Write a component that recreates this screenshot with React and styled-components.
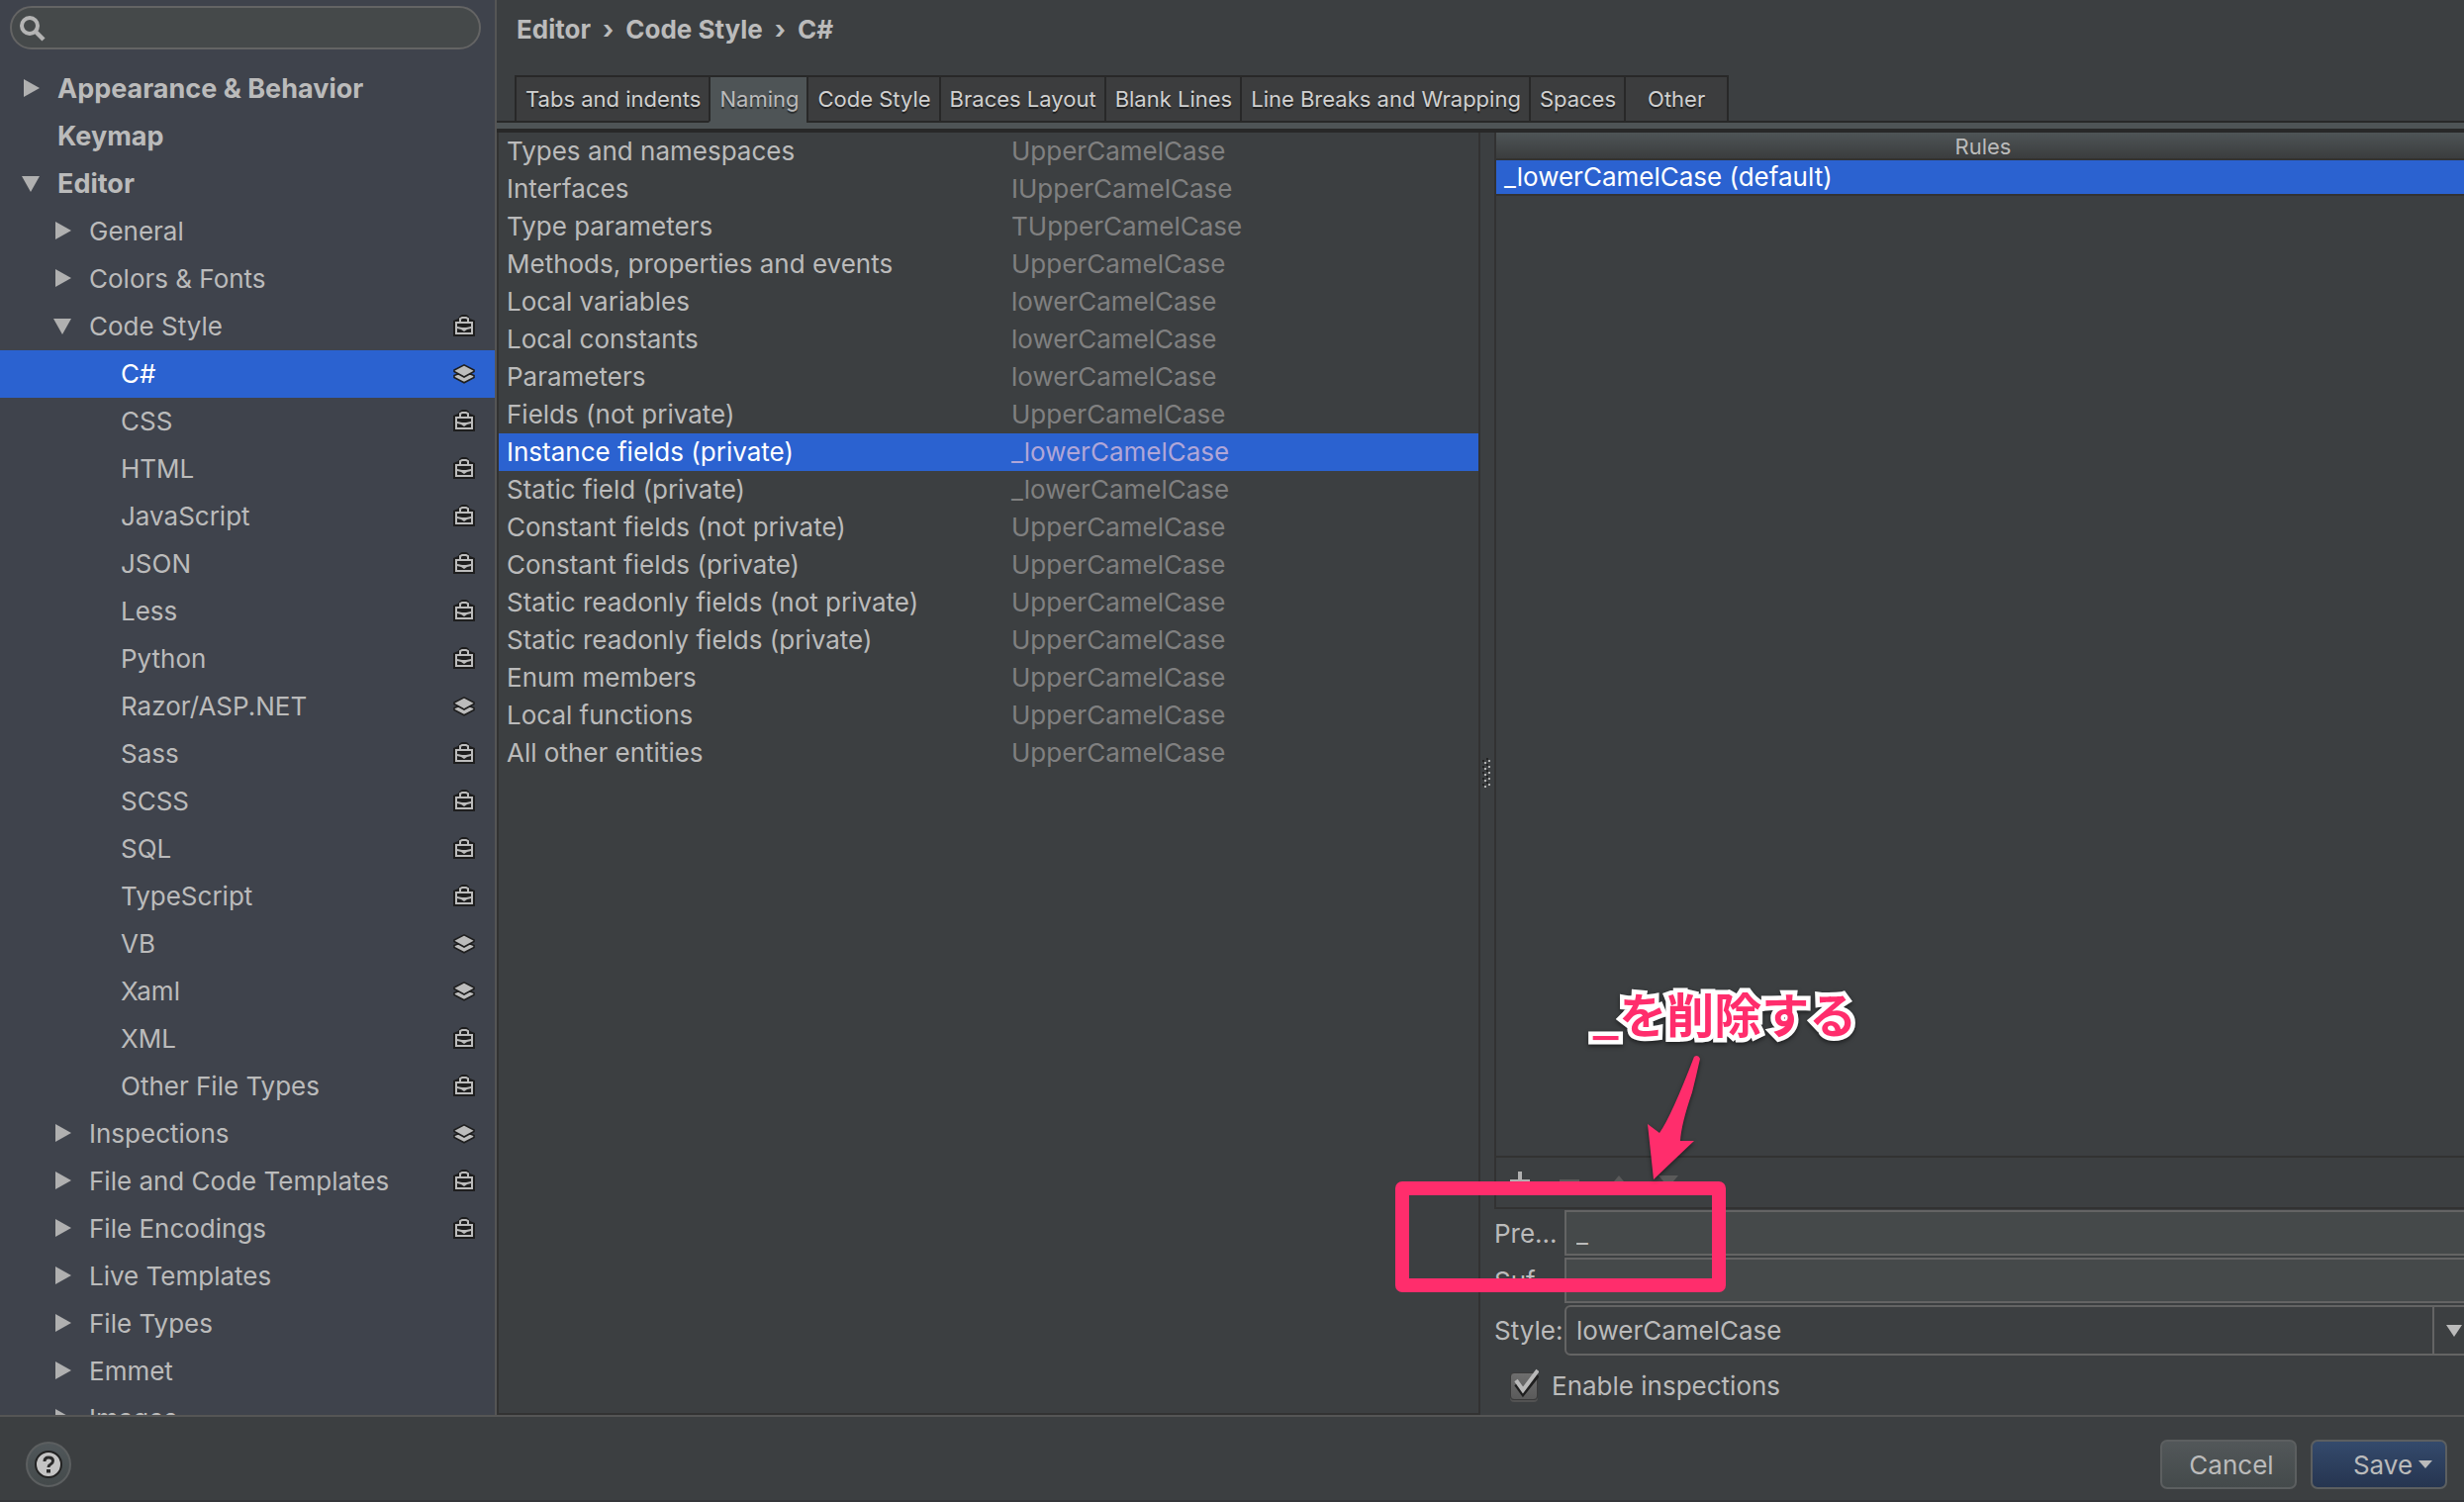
import React, { useState } from "react";
import styled, { createGlobalStyle, css } from "styled-components";

const c = {
  bg: "#3c3f41",
  side: "#3f434c",
  select: "#2b62d0",
  text: "#bbbbbb",
  muted: "#808080",
  dark: "#282828",
  line: "#323232",
  edge: "#555555",
  field: "#45494a",
  strip: "#4e5456",
  pink: "#ff2d6c",
};

const GlobalStyle = createGlobalStyle`
  * { box-sizing: border-box; }
  body { margin: 0; background: ${c.bg}; overflow: hidden; }
  body, button, input, select {
    font-family: Inter, "Liberation Sans", "Noto Sans CJK JP", sans-serif;
    font-size: 26px;
    color: ${c.text};
  }
  button { margin: 0; padding: 0; border: 0; background: none; text-align: left; }
`;

const Window = styled.div`
  display: grid;
  grid-template-columns: 502px minmax(0, 1fr);
  grid-template-rows: minmax(0, 1fr) auto;
  height: 100vh;
  overflow: hidden;
  background: ${c.bg};
`;

const Sidebar = styled.nav`
  display: flex;
  flex-direction: column;
  min-height: 0;
  overflow: hidden;
  background: ${c.side};
  border-right: 2px solid ${c.edge};
`;

const SearchBox = styled.label`
  display: flex;
  flex: none;
  align-items: center;
  height: 44px;
  margin: 6px 14px 16px 10px;
  padding: 0 20px 0 8px;
  gap: 8px;
  border: 2px solid #646464;
  border-radius: 22px;
  background: ${c.field};
`;

const SearchInput = styled.input`
  flex: 1;
  min-width: 0;
  border: 0;
  outline: 0;
  background: transparent;
`;

const Tree = styled.ul`
  margin: 0;
  padding: 0;
  list-style: none;
`;

const TreeItem = styled.button`
  display: flex;
  align-items: center;
  width: 100%;
  height: 48px;
  padding: 0 20px 2px ${(p) => 20 + p.$level * 32}px;
  font-weight: ${(p) => (p.$level === 0 ? 700 : 400)};
  font-size: ${(p) => (p.$level === 0 ? 27 : 26)}px;
  color: ${(p) => (p.$on ? "#ffffff" : c.text)};
  background: ${(p) => (p.$on ? c.select : "transparent")};
`;

const ArrowSlot = styled.span`
  display: flex;
  width: 38px;
`;

const TreeLabel = styled.span`
  flex: 1;
  white-space: nowrap;
`;

const Content = styled.main`
  display: flex;
  flex-direction: column;
  min-height: 0;
  min-width: 0;
  overflow: hidden;
`;

const Breadcrumb = styled.h1`
  display: flex;
  align-items: center;
  gap: 12px;
  height: 58px;
  margin: 0 0 18px;
  padding-left: 20px;
  font-size: 26px;
  font-weight: 700;
`;

const TabBar = styled.div`
  display: flex;
  height: 48px;
  padding-left: 18px;
  background: linear-gradient(${c.dark}, ${c.dark}) bottom / 100% 2px no-repeat;
`;

const Tab = styled.button`
  padding: 0 8px 0 9px;
  border: 2px solid ${c.dark};
  border-right-width: 0;
  font-size: 22px;
  white-space: nowrap;
  text-shadow: 0 2px 1px rgba(0, 0, 0, 0.5);
  ${(p) =>
    p.$wide &&
    css`
      padding: 0 22px;
    `}
  &:last-child {
    border-right-width: 2px;
  }
  ${(p) =>
    p.$on
      ? css`
          color: ${c.text};
          background: ${c.strip};
          border-bottom-color: ${c.strip};
        `
      : css`
          color: #d0d0d0;
          background: #3c3d3e;
        `}
`;

const TabStrip = styled.div`
  height: 10px;
  background: ${c.strip};
  border-bottom: 4px solid ${c.dark};
`;

const Split = styled.div`
  display: grid;
  grid-template-columns: minmax(0, 497fr) 14px minmax(0, 494fr);
  flex: 1;
  min-height: 0;
  margin-right: -8px;
`;

const NamingPane = styled.div`
  border: 2px solid ${c.line};
  border-top: 0;
`;

const NamingTable = styled.table`
  width: 100%;
  border-collapse: collapse;
  table-layout: fixed;
`;

const NamingRow = styled.tr`
  height: 38px;
  color: ${(p) => (p.$on ? "#ffffff" : c.text)};
  background: ${(p) => (p.$on ? c.select : "transparent")};
`;

const EntityCell = styled.td`
  width: 511px;
  padding: 0 0 0 8px;
  line-height: 38px;
  white-space: nowrap;
`;

const StyleCell = styled.td`
  padding: 0 0 0 7px;
  line-height: 38px;
  color: ${(p) => (p.$on ? "#b0a6d8" : c.muted)};
`;

const Divider = styled.div`
  display: flex;
  align-items: center;
  padding: 0 0 2px 2px;
`;

const RulePane = styled.div`
  display: flex;
  flex-direction: column;
  min-height: 0;
`;

const RuleBox = styled.section`
  display: flex;
  flex: 1;
  flex-direction: column;
  border: 2px solid ${c.line};
  border-top: 0;
`;

const RuleHeader = styled.h2`
  height: 28px;
  margin: 0;
  font-size: 22px;
  font-weight: 400;
  line-height: 28px;
  text-align: center;
  border-bottom: 2px solid ${c.line};
  background: linear-gradient(${c.strip}, #3b3d3e);
`;

const Rule = styled.button`
  height: 36px;
  padding: 0 0 2px 8px;
  color: #ffffff;
  background: ${c.select};
  border-bottom: 2px solid ${c.line};
`;

const RuleTools = styled.div`
  display: flex;
  align-items: center;
  height: 52px;
  margin-top: auto;
  padding-left: 6px;
  border-top: 2px solid ${c.line};
`;

const ToolButton = styled.button`
  display: flex;
  align-items: center;
  justify-content: center;
  width: 50px;
  height: 100%;
  padding-right: 14px;
  padding-bottom: 2px;
`;

const Form = styled.div`
  display: grid;
  grid-template-columns: 71px minmax(0, 1fr);
  align-items: center;
  row-gap: 2px;
  padding-top: 1px;
`;

const FieldLabel = styled.label`
  white-space: nowrap;
`;

const TextField = styled.input`
  width: 100%;
  height: 46px;
  padding: 0 10px;
  border: 2px solid #646464;
  outline: 0;
  background: ${c.field};
`;

const SelectBox = styled.div`
  display: grid;
  grid-template-columns: minmax(0, 1fr) 38px;
  height: 51px;
  border: 2px solid #646464;
  border-radius: 6px;
`;

const StyleSelect = styled.select`
  grid-area: 1 / 1 / 2 / 3;
  width: 100%;
  padding: 0 10px;
  border: 0;
  outline: 0;
  appearance: none;
  background: transparent;
`;

const SelectArrow = styled.span`
  display: flex;
  grid-area: 1 / 2;
  align-items: center;
  padding-left: 12px;
  border-left: 2px solid #646464;
  pointer-events: none;
`;

const CheckRow = styled.label`
  display: flex;
  align-items: center;
  gap: 13px;
  height: 60px;
  padding-left: 15px;
`;

const CheckMark = styled.span`
  display: grid;
  width: 30px;
  height: 34px;
`;

const CheckInput = styled.input`
  grid-area: 1 / 1;
  width: 28px;
  height: 28px;
  margin: 4px 1px 0;
  appearance: none;
  border-radius: 4px;
  border: 1px solid #3a3a3a;
  background: linear-gradient(#6e6e6e, #5a5a5a);
  box-shadow: 0 2px 0 #525252;
  & + svg { visibility: hidden; }
  &:checked + svg { visibility: visible; }
`;

const CheckIcon = styled.svg`
  grid-area: 1 / 1;
  pointer-events: none;
`;

const Footer = styled.footer`
  display: flex;
  grid-column: 1 / 3;
  align-items: center;
  height: 88px;
  padding: 12px 17px 0 26px;
  gap: 14px;
  border-top: 2px solid ${c.edge};
  border-bottom: 2px solid #35363a;
`;

const HelpButton = styled.button`
  display: flex;
  align-items: center;
  justify-content: center;
  width: 46px;
  height: 46px;
  margin-right: auto;
  border: 2px solid #5c5f60;
  border-radius: 50%;
  background: linear-gradient(#50575a, #444a4b);
`;

const ActionButton = styled.button`
  display: flex;
  align-items: center;
  justify-content: center;
  gap: 6px;
  width: 138px;
  height: 50px;
  padding-left: ${(p) => (p.$primary ? 28 : 6)}px;
  border: 2px solid #5c5f60;
  border-radius: 7px;
  background: ${(p) =>
    p.$primary ? "linear-gradient(#344a6c, #263550)" : "linear-gradient(#525759, #444a4b)"};
`;

/* Callout that floats over the rule editor, anchored to the prefix field */
const FieldAnchor = styled.div`
  position: relative;
`;

const Highlight = styled.div`
  position: absolute;
  z-index: 2;
  left: -171px;
  top: -29px;
  width: 334px;
  height: 112px;
  border: 14px solid ${c.pink};
  border-radius: 7px;
  pointer-events: none;
`;

const CalloutArrow = styled.svg`
  position: absolute;
  z-index: 3;
  left: 76px;
  top: -161px;
  pointer-events: none;
  filter: drop-shadow(0 2px 2px rgba(0, 0, 0, 0.5));
`;

const CalloutText = styled.span`
  position: absolute;
  z-index: 3;
  left: 28px;
  top: -232px;
  font: 700 48px/64px "Noto Sans CJK JP", sans-serif;
  white-space: nowrap;
  color: ${c.pink};
  paint-order: stroke fill;
  -webkit-text-stroke: 9px #ffffff;
  stroke-linejoin: round;
  filter: drop-shadow(0 2px 2px rgba(0, 0, 0, 0.5));
  pointer-events: none;
`;

const Expander = ({ open }) => (
  <svg width="20" height="18" viewBox="0 0 20 18" fill="#b0b0b0" aria-hidden="true">
    {open ? <path d="M2 2H20L11 18Z" /> : <path d="M4 0L20 9L4 18Z" />}
  </svg>
);

const SearchIcon = () => (
  <svg width="28" height="28" viewBox="0 0 28 28" fill="none" stroke="#b4b4b4" aria-hidden="true">
    <circle cx="10" cy="12" r="8" strokeWidth="4" />
    <path d="M16 18L24 26" strokeWidth="4.5" />
  </svg>
);

const CaseIcon = () => (
  <svg width="22" height="22" viewBox="0 0 22 22" aria-hidden="true">
    <path d="M0 22V6L5 4L7 1L9 0H13L15 1L17 4L22 6V22Z" fill="#1e1e1e" />
    <path d="M7 7V4L9 3H13L15 4V7" fill="none" stroke="#bcbcbc" strokeWidth="2" />
    <path d="M2 7H20V20H2Z" fill="#bcbcbc" />
    <path d="M4 9H18V12L13 13H9L4 12Z" fill="#1e1e1e" />
    <path d="M4 14L8 15L11 17L14 15L18 14V18H4Z" fill="#1e1e1e" />
  </svg>
);

const LayersIcon = () => (
  <svg width="22" height="22" viewBox="0 0 22 22" stroke="#1e1e1e" strokeWidth="1.6" aria-hidden="true">
    <path d="M1 13.5L4 12.3H18L21 13.500V15.5L11 20.8L1 15.5Z" fill="#bcbcbc" />
    <path d="M1 8L11 2.8L21 8V9.5L11 15L1 9.5Z" fill="#bcbcbc" />
  </svg>
);

const TREE = [
  ["Appearance & Behavior", 0, "closed"],
  ["Keymap", 0],
  ["Editor", 0, "open"],
  ["General", 1, "closed"],
  ["Colors & Fonts", 1, "closed"],
  ["Code Style", 1, "open", "case"],
  ["C#", 2, null, "layers"],
  ["CSS", 2, null, "case"],
  ["HTML", 2, null, "case"],
  ["JavaScript", 2, null, "case"],
  ["JSON", 2, null, "case"],
  ["Less", 2, null, "case"],
  ["Python", 2, null, "case"],
  ["Razor/ASP.NET", 2, null, "layers"],
  ["Sass", 2, null, "case"],
  ["SCSS", 2, null, "case"],
  ["SQL", 2, null, "case"],
  ["TypeScript", 2, null, "case"],
  ["VB", 2, null, "layers"],
  ["Xaml", 2, null, "layers"],
  ["XML", 2, null, "case"],
  ["Other File Types", 2, null, "case"],
  ["Inspections", 1, "closed", "layers"],
  ["File and Code Templates", 1, "closed", "case"],
  ["File Encodings", 1, "closed", "case"],
  ["Live Templates", 1, "closed"],
  ["File Types", 1, "closed"],
  ["Emmet", 1, "closed"],
  ["Images", 1, "closed"],
];

const TABS = [
  "Tabs and indents",
  "Naming",
  "Code Style",
  "Braces Layout",
  "Blank Lines",
  "Line Breaks and Wrapping",
  "Spaces",
  "Other",
];

const NAMING = [
  ["Types and namespaces", "UpperCamelCase"],
  ["Interfaces", "IUpperCamelCase"],
  ["Type parameters", "TUpperCamelCase"],
  ["Methods, properties and events", "UpperCamelCase"],
  ["Local variables", "lowerCamelCase"],
  ["Local constants", "lowerCamelCase"],
  ["Parameters", "lowerCamelCase"],
  ["Fields (not private)", "UpperCamelCase"],
  ["Instance fields (private)", "_lowerCamelCase"],
  ["Static field (private)", "_lowerCamelCase"],
  ["Constant fields (not private)", "UpperCamelCase"],
  ["Constant fields (private)", "UpperCamelCase"],
  ["Static readonly fields (not private)", "UpperCamelCase"],
  ["Static readonly fields (private)", "UpperCamelCase"],
  ["Enum members", "UpperCamelCase"],
  ["Local functions", "UpperCamelCase"],
  ["All other entities", "UpperCamelCase"],
];

export default function App() {
  const [page, setPage] = useState("C#");
  const [tab, setTab] = useState("Naming");
  const [entity, setEntity] = useState("Instance fields (private)");

  return (
    <Window>
      <GlobalStyle />
      <Sidebar>
        <SearchBox>
          <SearchIcon />
          <SearchInput type="text" aria-label="Search" />
        </SearchBox>
        <Tree>
          {TREE.map(([name, level, state, icon]) => (
            <li key={name}>
              <TreeItem type="button" $level={level} $on={name === page} onClick={() => setPage(name)}>
                <ArrowSlot>{state && <Expander open={state === "open"} />}</ArrowSlot>
                <TreeLabel>{name}</TreeLabel>
                {icon === "case" && <CaseIcon />}
                {icon === "layers" && <LayersIcon />}
              </TreeItem>
            </li>
          ))}
        </Tree>
      </Sidebar>

      <Content>
        <Breadcrumb>
          <span>Editor</span>
          <span>›</span>
          <span>Code Style</span>
          <span>›</span>
          <span>C#</span>
        </Breadcrumb>
        <TabBar role="tablist">
          {TABS.map((name) => (
            <Tab
              key={name}
              type="button"
              role="tab"
              aria-selected={name === tab}
              $on={name === tab}
              $wide={name === "Other"}
              onClick={() => setTab(name)}
            >
              {name}
            </Tab>
          ))}
        </TabBar>
        <TabStrip />
        <Split>
          <NamingPane>
            <NamingTable>
              <tbody>
                {NAMING.map(([name, style]) => (
                  <NamingRow key={name} $on={name === entity} onClick={() => setEntity(name)}>
                    <EntityCell>{name}</EntityCell>
                    <StyleCell $on={name === entity}>{style}</StyleCell>
                  </NamingRow>
                ))}
              </tbody>
            </NamingTable>
          </NamingPane>
          <Divider>
            <svg width="8" height="30" viewBox="0 0 8 30" aria-hidden="true">
              {[0, 6, 12, 18, 24].map((y) => (
                <g key={y}>
                  <path d={`M4 ${y}h2v2h-2zM0 ${y + 2}h2v2h-2z`} fill="#222" />
                  <path d={`M6 ${y + 2}h2v2h-2zM2 ${y + 4}h2v2h-2z`} fill="#b0b0b0" />
                </g>
              ))}
            </svg>
          </Divider>
          <RulePane>
            <RuleBox>
              <RuleHeader>Rules</RuleHeader>
              <Rule type="button">_lowerCamelCase (default)</Rule>
              <RuleTools>
                <ToolButton type="button" aria-label="Add">
                  <svg width="20" height="20" fill="#b0b0b0">
                    <path d="M8 0h4v8h8v4h-8v8h-4v-8h-8v-4h8z" />
                  </svg>
                </ToolButton>
                <ToolButton type="button" aria-label="Remove">
                  <svg width="20" height="20" fill="#5a5a5a">
                    <path d="M0 8h20v4h-20z" />
                  </svg>
                </ToolButton>
                <ToolButton type="button" aria-label="Move up">
                  <svg width="20" height="12" fill="#5a5a5a">
                    <path d="M10 0L20 12H0z" />
                  </svg>
                </ToolButton>
                <ToolButton type="button" aria-label="Move down">
                  <svg width="20" height="12" fill="#5a5a5a">
                    <path d="M0 0H20L10 12z" />
                  </svg>
                </ToolButton>
              </RuleTools>
            </RuleBox>
            <Form>
              <FieldLabel htmlFor="prefix">Pre...</FieldLabel>
              <FieldAnchor>
                <TextField id="prefix" type="text" defaultValue="_" />
                <Highlight />
                <CalloutText>_を削除する</CalloutText>
                <CalloutArrow width="80" height="132" viewBox="0 0 80 132">
                  <path
                    d="M55 6Q59 3 61 8Q57 26 53 42Q42 74 41 91L55 91L14 130L8 74L20 83Q32 66 55 6Z"
                    fill={c.pink}
                  />
                </CalloutArrow>
              </FieldAnchor>
              <FieldLabel htmlFor="suffix">Suf...</FieldLabel>
              <TextField id="suffix" type="text" />
              <FieldLabel htmlFor="style">Style:</FieldLabel>
              <SelectBox>
                <StyleSelect id="style" defaultValue="lowerCamelCase">
                  <option>lowerCamelCase</option>
                  <option>UpperCamelCase</option>
                </StyleSelect>
                <SelectArrow>
                  <svg width="16" height="12" fill="#bbbbbb" aria-hidden="true">
                    <path d="M0 0H16L8 12z" />
                  </svg>
                </SelectArrow>
              </SelectBox>
            </Form>
            <CheckRow>
              <CheckMark>
                <CheckInput type="checkbox" defaultChecked />
                <CheckIcon width="30" height="34" viewBox="0 0 30 34" fill="none" strokeWidth="4">
                  <path d="M7 16L14 26L29 7" stroke="#1e1e1e" />
                  <path d="M7 12L14 22L29 2" stroke="#b8b8b8" />
                </CheckIcon>
              </CheckMark>
              Enable inspections
            </CheckRow>
          </RulePane>
        </Split>
      </Content>

      <Footer>
        <HelpButton type="button" aria-label="Help">
          <svg width="28" height="28" viewBox="0 0 28 28" fill="none" aria-hidden="true">
            <circle cx="14" cy="14" r="13" fill="#c4c4c4" stroke="#222" strokeWidth="2" />
            <path d="M10 11Q10 7 14 7Q18.500 7 18.500 10.500Q18.500 12.500 16 14Q14 15 14 17" stroke="#2a2a2a" strokeWidth="3" />
            <path d="M12 19h4v3.500h-4z" fill="#2a2a2a" />
          </svg>
        </HelpButton>
        <ActionButton type="button">Cancel</ActionButton>
        <ActionButton type="button" $primary>
          Save
          <svg width="14" height="9" fill="#bbbbbb" aria-hidden="true">
            <path d="M0 0H14L7 8z" />
          </svg>
        </ActionButton>
      </Footer>
    </Window>
  );
}
